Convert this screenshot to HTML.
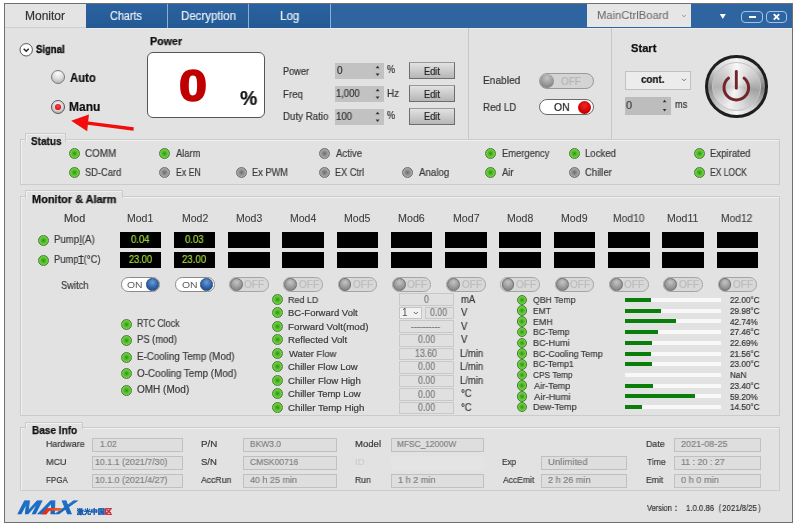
<!DOCTYPE html><html><head><meta charset="utf-8"><style>
html,body{margin:0;padding:0;background:#fff;width:796px;height:527px;overflow:hidden;}
body{position:relative;font-family:"Liberation Sans", sans-serif;}
.a{position:absolute;box-sizing:border-box;}
.t{position:absolute;white-space:nowrap;transform-origin:0 0;will-change:transform;-webkit-text-stroke-width:0.2px;}
.ledg{border-radius:50%;border:0.9px solid #4a7a34;background:radial-gradient(circle at 50% 50%, #348e1c 0%, #4fb22a 30%, #6ad53c 62%, #5cc431 88%);}
.ledx{border-radius:50%;border:0.9px solid #6c6c6c;background:radial-gradient(circle at 50% 50%, #6c6c6c 0%, #8a8a8a 32%, #a9a9a9 64%, #929292 88%);}
.grp{border:1px solid #c6c6c6;box-shadow:inset 1px 1px 0 #f2f2f2;}
.gtab{border:1px solid #c6c6c6;border-bottom:none;background:#e2e2e2;box-shadow:inset 1px 1px 0 #f2f2f2;}
</style></head><body>

<div class="a" style="left:4.00px;top:3.00px;width:789.00px;height:520.00px;background:#e2e2e2;border:1px solid #707070;"></div>
<div class="a" style="left:5.00px;top:4.00px;width:787.00px;height:24.00px;background:#2e64a0;"></div>
<div class="a" style="left:86.00px;top:28.00px;width:706.00px;height:1.00px;background:#ececec;"></div>
<div class="a" style="left:5.00px;top:4.00px;width:81.00px;height:23.00px;background:#e4e4e4;"></div>
<div class="a" style="left:86.00px;top:4.00px;width:81.00px;height:24.00px;background:linear-gradient(#2a62a0,#245a94);"></div>
<div class="a" style="left:167.00px;top:4.00px;width:81.00px;height:24.00px;background:linear-gradient(#2a62a0,#245a94);"></div>
<div class="a" style="left:248.00px;top:4.00px;width:82.00px;height:24.00px;background:linear-gradient(#2a62a0,#245a94);"></div>
<div class="a" style="left:167.00px;top:4.00px;width:1.00px;height:24.00px;background:#8cb0d4;"></div>
<div class="a" style="left:248.00px;top:4.00px;width:1.00px;height:24.00px;background:#8cb0d4;"></div>
<div class="a" style="left:330.00px;top:4.00px;width:1.00px;height:24.00px;background:#8cb0d4;"></div>
<div class="a" style="left:5.00px;top:27.00px;width:81.00px;height:1.00px;background:#cfcfcf;"></div>
<div class="t" style="left:25.04px;top:9.94px;font-size:12px;line-height:12px;color:#333;">Monitor</div>
<div class="t" style="left:110.46px;top:9.64px;font-size:12px;line-height:12px;color:#e6edf5;transform:scaleX(0.9033);">Charts</div>
<div class="t" style="left:180.88px;top:9.74px;font-size:12px;line-height:12px;color:#e6edf5;transform:scaleX(0.9583);">Decryption</div>
<div class="t" style="left:279.87px;top:9.74px;font-size:12px;line-height:12px;color:#e6edf5;transform:scaleX(0.9649);">Log</div>
<div class="a" style="left:587.00px;top:4.00px;width:104.00px;height:23.00px;background:#e6e6e6;"></div>
<div class="t" style="left:597.10px;top:10.07px;font-size:11.5px;line-height:11.5px;color:#6a6a6a;transform:scaleX(0.9747);-webkit-text-stroke-width:0.05px;">MainCtrlBoard</div>
<svg class="a" style="left:680px;top:12px" width="8" height="8"><path d="M2.2 3 L4 4.8 L5.8 3" fill="none" stroke="#888" stroke-width="0.9"/></svg>
<svg class="a" style="left:716px;top:10px" width="14" height="12"><path d="M3.8 4 L9.8 4 L6.8 9 Z" fill="#fff"/></svg>
<div class="a" style="left:741.00px;top:10.50px;width:22.00px;height:12.00px;border:1.5px solid #a4c4e6;border-radius:4px;"></div>
<div class="a" style="left:748.50px;top:15.50px;width:7.50px;height:2.00px;background:#fff;"></div>
<div class="a" style="left:766.00px;top:10.50px;width:21.00px;height:12.00px;border:1.5px solid #a4c4e6;border-radius:4px;"></div>
<svg class="a" style="left:766px;top:10.5px" width="21" height="12"><path d="M7.8 3.2 L13.2 8.6 M13.2 3.2 L7.8 8.6" stroke="#fff" stroke-width="1.9"/></svg>
<div class="a" style="left:468.00px;top:28.00px;width:1.00px;height:111.00px;background:#c8c8c8;"></div>
<div class="a" style="left:611.00px;top:28.00px;width:1.00px;height:111.00px;background:#c8c8c8;"></div>
<svg class="a" style="left:19px;top:43px" width="15" height="15"><circle cx="7.2" cy="6.8" r="6.2" fill="#fff" stroke="#444" stroke-width="0.9"/><path d="M4.7 5.7 L7.2 8.2 L9.7 5.7" fill="none" stroke="#222" stroke-width="1.5"/></svg>
<div class="t" style="left:35.51px;top:44.83px;font-size:10px;line-height:10px;color:#111;font-weight:bold;transform:scaleX(0.9501);-webkit-text-stroke-width:0.4px;">Signal</div>
<div class="a" style="left:50.8px;top:69.9px;width:14px;height:14px;border-radius:50%;border:1px solid #7a7a7a;background:radial-gradient(circle at 50% 20%, #fdfdfd 0%, #dcdcdc 50%, #a4a4a4 100%);"></div>
<div class="t" style="left:69.72px;top:71.64px;font-size:12px;line-height:12px;color:#111;font-weight:bold;transform:scaleX(0.9427);">Auto</div>
<div class="a" style="left:50.8px;top:100px;width:14px;height:14px;border-radius:50%;border:1.2px solid #555;background:radial-gradient(circle at 50% 30%, #f0f0f0 0%, #cfcfcf 60%, #9a9a9a 100%);"></div>
<div class="a" style="left:54.6px;top:103.8px;width:6.5px;height:6.5px;border-radius:50%;background:radial-gradient(circle at 50% 40%, #ff4a4a 0%, #e81010 60%, #b00000 100%);"></div>
<div class="t" style="left:69.22px;top:101.04px;font-size:12px;line-height:12px;color:#111;font-weight:bold;">Manu</div>
<svg class="a" style="left:60px;top:108px" width="80" height="30"><path d="M24 14.6 L73.6 21" stroke="#f20c0c" stroke-width="3.3"/><path d="M11.2 12.8 L28.9 6.5 L27.2 23.3 Z" fill="#f20c0c"/></svg>
<div class="t" style="left:150.20px;top:36.49px;font-size:11px;line-height:11px;color:#111;font-weight:bold;transform:scaleX(0.9745);-webkit-text-stroke:0.25px #111;">Power</div>
<div class="a" style="left:146.70px;top:51.70px;width:118.00px;height:66.00px;background:#fff;border:1px solid #555;border-radius:6px;"></div>
<div class="t" style="left:179.49px;top:62.71px;font-size:45px;line-height:45px;color:#c00000;font-weight:bold;transform:scaleX(1.1181);-webkit-text-stroke:1.6px #c00000;">0</div>
<div class="t" style="left:239.51px;top:87.87px;font-size:20px;line-height:20px;color:#111;font-weight:bold;transform:scaleX(0.9702);">%</div>
<div class="t" style="left:283.07px;top:65.71px;font-size:10.5px;line-height:10.5px;color:#333;transform:scaleX(0.8740);">Power</div>
<div class="a" style="left:335.20px;top:63.30px;width:48.50px;height:15.60px;background:#c2c2c2;"></div>
<div class="t" style="left:336.60px;top:66.13px;font-size:10px;line-height:10px;color:#333;">0</div>
<svg class="a" style="left:373px;top:63.3px" width="9" height="16"><path d="M2.6 5.2 L4.6 2.7 L6.6 5.2 Z M2.6 10.5 L4.6 13 L6.6 10.5 Z" fill="#333"/></svg>
<div class="t" style="left:387.18px;top:64.41px;font-size:10.5px;line-height:10.5px;color:#333;transform:scaleX(0.8595);">%</div>
<div class="a" style="left:409.00px;top:62.20px;width:46.10px;height:16.70px;background:linear-gradient(#e2e2e2,#b6b6b6);border:1px solid #6e6e6e;border-top-color:#9a9a9a;"></div>
<div class="t" style="left:423.86px;top:65.71px;font-size:10.5px;line-height:10.5px;color:#222;transform:scaleX(0.8854);">Edit</div>
<div class="t" style="left:283.03px;top:88.81px;font-size:10.5px;line-height:10.5px;color:#333;transform:scaleX(0.9225);">Freq</div>
<div class="a" style="left:335.20px;top:86.10px;width:48.50px;height:15.60px;background:#c2c2c2;"></div>
<div class="t" style="left:336.29px;top:88.93px;font-size:10px;line-height:10px;color:#333;transform:scaleX(0.9414);">1,000</div>
<svg class="a" style="left:373px;top:86.1px" width="9" height="16"><path d="M2.6 5.2 L4.6 2.7 L6.6 5.2 Z M2.6 10.5 L4.6 13 L6.6 10.5 Z" fill="#333"/></svg>
<div class="t" style="left:386.71px;top:87.61px;font-size:10.5px;line-height:10.5px;color:#333;transform:scaleX(0.9436);">Hz</div>
<div class="a" style="left:409.00px;top:85.00px;width:46.10px;height:16.70px;background:linear-gradient(#e2e2e2,#b6b6b6);border:1px solid #6e6e6e;border-top-color:#9a9a9a;"></div>
<div class="t" style="left:423.86px;top:88.51px;font-size:10.5px;line-height:10.5px;color:#222;transform:scaleX(0.8854);">Edit</div>
<div class="t" style="left:283.02px;top:111.41px;font-size:10.5px;line-height:10.5px;color:#333;transform:scaleX(0.9262);">Duty Ratio</div>
<div class="a" style="left:335.20px;top:109.00px;width:48.50px;height:15.60px;background:#c2c2c2;"></div>
<div class="t" style="left:336.28px;top:111.83px;font-size:10px;line-height:10px;color:#333;transform:scaleX(0.9646);">100</div>
<svg class="a" style="left:373px;top:109px" width="9" height="16"><path d="M2.6 5.2 L4.6 2.7 L6.6 5.2 Z M2.6 10.5 L4.6 13 L6.6 10.5 Z" fill="#333"/></svg>
<div class="t" style="left:387.18px;top:110.11px;font-size:10.5px;line-height:10.5px;color:#333;transform:scaleX(0.8595);">%</div>
<div class="a" style="left:409.00px;top:107.90px;width:46.10px;height:16.70px;background:linear-gradient(#e2e2e2,#b6b6b6);border:1px solid #6e6e6e;border-top-color:#9a9a9a;"></div>
<div class="t" style="left:423.86px;top:111.41px;font-size:10.5px;line-height:10.5px;color:#222;transform:scaleX(0.8854);">Edit</div>
<div class="t" style="left:482.79px;top:75.09px;font-size:11px;line-height:11px;color:#333;transform:scaleX(0.9233);">Enabled</div>
<div class="t" style="left:482.81px;top:101.89px;font-size:11px;line-height:11px;color:#333;transform:scaleX(0.8938);">Red LD</div>
<div class="a" style="left:538.60px;top:72.60px;width:55.00px;height:16.20px;background:#d4d4d4;border:1px solid #9a9a9a;border-radius:8.1px;"></div>
<div class="a" style="left:539.8px;top:73.6px;width:14.2px;height:14.2px;border-radius:50%;background:radial-gradient(circle at 50% 28%, #c4c4c4 0%, #8e8e8e 65%, #6a6a6a 100%);"></div>
<div class="t" style="left:561.05px;top:75.61px;font-size:10.5px;line-height:10.5px;color:#b4b4b4;transform:scaleX(0.9449);">OFF</div>
<div class="a" style="left:538.60px;top:99.20px;width:55.00px;height:16.00px;background:#fff;border:1px solid #6a6a6a;border-radius:8px;"></div>
<div class="t" style="left:553.84px;top:102.11px;font-size:10.5px;line-height:10.5px;color:#222;transform:scaleX(0.9835);">ON</div>
<div class="a" style="left:577.8px;top:100.6px;width:13.2px;height:13.2px;border-radius:50%;background:radial-gradient(circle at 50% 35%, #f02828 0%, #d00000 60%, #8a0000 100%);"></div>
<div class="t" style="left:631.47px;top:43.19px;font-size:11px;line-height:11px;color:#111;font-weight:bold;transform:scaleX(1.0128);-webkit-text-stroke:0.25px #111;">Start</div>
<div class="a" style="left:625.30px;top:71.10px;width:65.30px;height:19.00px;background:#ececec;border:1px solid #c0c0c0;"></div>
<div class="t" style="left:640.91px;top:73.99px;font-size:11px;line-height:11px;color:#111;font-weight:bold;transform:scaleX(0.8931);">cont.</div>
<svg class="a" style="left:680px;top:76px" width="8" height="8"><path d="M2 2.8 L4 4.8 L6 2.8" fill="none" stroke="#666" stroke-width="0.9"/></svg>
<div class="a" style="left:625.30px;top:96.50px;width:45.60px;height:18.20px;background:#bdbdbd;"></div>
<div class="t" style="left:626.36px;top:100.11px;font-size:10.5px;line-height:10.5px;color:#444;transform:scaleX(1.0516);">0</div>
<svg class="a" style="left:660px;top:97px" width="9" height="17"><path d="M2.8 5.2 L4.6 2.7 L6.4 5.2 Z M2.8 12 L4.6 14.5 L6.4 12 Z" fill="#333"/></svg>
<div class="t" style="left:675.10px;top:99.01px;font-size:10.5px;line-height:10.5px;color:#333;transform:scaleX(0.8791);">ms</div>
<div class="a" style="left:705.30px;top:55.30px;width:62.4px;height:62.4px;border-radius:50%;background:#1e1e1e;"></div>
<div class="a" style="left:707.70px;top:57.70px;width:57.6px;height:57.6px;border-radius:50%;background:conic-gradient(from 0deg, #f4f4f4 0deg, #d4d4d4 45deg, #7c7c7c 95deg, #cfcfcf 140deg, #f8f8f8 180deg, #c8c8c8 225deg, #8a8a8a 268deg, #d6d6d6 312deg, #f4f4f4 360deg);"></div>
<div class="a" style="left:711.75px;top:61.75px;width:49.5px;height:49.5px;border-radius:50%;background:radial-gradient(circle, #c4c4c4 80%, #707070 100%);"></div>
<div class="a" style="left:713.30px;top:63.30px;width:46.4px;height:46.4px;border-radius:50%;background:radial-gradient(circle, rgba(255,255,255,0.65) 0%, rgba(255,255,255,0) 45%, rgba(0,0,0,0) 80%, rgba(0,0,0,0.22) 100%), conic-gradient(from 0deg, #f8f8f8 0deg, #c6c6c6 65deg, #a2a2a2 100deg, #d8d8d8 160deg, #f0f0f0 200deg, #b4b4b4 268deg, #d2d2d2 320deg, #f8f8f8 360deg);"></div>
<svg class="a" style="left:704px;top:54px" width="65" height="65">
<path d="M24.5 24.1 A12.3 12.3 0 1 0 40.1 24.1" fill="none" stroke="#72262a" stroke-width="3" stroke-linecap="round"/>
<path d="M32.3 17.4 L32.3 34.3" stroke="#72262a" stroke-width="2.9" stroke-linecap="round"/>
</svg>
<div class="a" style="left:19.60px;top:139.40px;width:760.40px;height:46.00px;border:1px solid #cbcbcb;box-shadow:inset 1px 1px 0 #f0f0f0;"></div>
<div class="a" style="left:25.30px;top:133.40px;width:41.00px;height:8.20px;border:1px solid #cbcbcb;border-bottom:none;background:#e2e2e2;box-shadow:inset 1px 1px 0 #f0f0f0;"></div>
<div class="t" style="left:30.90px;top:135.79px;font-size:11px;line-height:11px;color:#111;font-weight:bold;transform:scaleX(0.9106);-webkit-text-stroke:0.25px #111;">Status</div>
<div class="a ledg" style="left:68.80px;top:147.50px;width:11px;height:11px;"></div>
<div class="t" style="left:85.31px;top:147.71px;font-size:10.5px;line-height:10.5px;color:#3a3a3a;transform:scaleX(0.9414);">COMM</div>
<div class="a ledg" style="left:159.40px;top:147.50px;width:11px;height:11px;"></div>
<div class="t" style="left:176.40px;top:147.71px;font-size:10.5px;line-height:10.5px;color:#3a3a3a;transform:scaleX(0.8889);">Alarm</div>
<div class="a ledx" style="left:318.60px;top:147.50px;width:11px;height:11px;"></div>
<div class="t" style="left:335.60px;top:147.71px;font-size:10.5px;line-height:10.5px;color:#3a3a3a;transform:scaleX(0.9114);">Active</div>
<div class="a ledg" style="left:485.30px;top:147.50px;width:11px;height:11px;"></div>
<div class="t" style="left:501.55px;top:147.71px;font-size:10.5px;line-height:10.5px;color:#3a3a3a;transform:scaleX(0.8931);">Emergency</div>
<div class="a ledg" style="left:568.50px;top:147.50px;width:11px;height:11px;"></div>
<div class="t" style="left:584.73px;top:147.71px;font-size:10.5px;line-height:10.5px;color:#3a3a3a;transform:scaleX(0.9122);">Locked</div>
<div class="a ledg" style="left:693.50px;top:147.50px;width:11px;height:11px;"></div>
<div class="t" style="left:709.73px;top:147.71px;font-size:10.5px;line-height:10.5px;color:#3a3a3a;transform:scaleX(0.9127);">Expirated</div>
<div class="a ledg" style="left:68.80px;top:166.50px;width:11px;height:11px;"></div>
<div class="t" style="left:85.38px;top:166.71px;font-size:10.5px;line-height:10.5px;color:#3a3a3a;transform:scaleX(0.8869);">SD-Card</div>
<div class="a ledx" style="left:159.40px;top:166.50px;width:11px;height:11px;"></div>
<div class="t" style="left:175.70px;top:166.71px;font-size:10.5px;line-height:10.5px;color:#3a3a3a;transform:scaleX(0.8311);">Ex EN</div>
<div class="a ledx" style="left:235.50px;top:166.50px;width:11px;height:11px;"></div>
<div class="t" style="left:251.76px;top:166.71px;font-size:10.5px;line-height:10.5px;color:#3a3a3a;transform:scaleX(0.8821);">Ex PWM</div>
<div class="a ledx" style="left:318.60px;top:166.50px;width:11px;height:11px;"></div>
<div class="t" style="left:334.87px;top:166.71px;font-size:10.5px;line-height:10.5px;color:#3a3a3a;transform:scaleX(0.8704);">EX Ctrl</div>
<div class="a ledx" style="left:402.00px;top:166.50px;width:11px;height:11px;"></div>
<div class="t" style="left:419.00px;top:166.71px;font-size:10.5px;line-height:10.5px;color:#3a3a3a;transform:scaleX(0.9274);">Analog</div>
<div class="a ledg" style="left:485.30px;top:166.50px;width:11px;height:11px;"></div>
<div class="t" style="left:502.30px;top:166.71px;font-size:10.5px;line-height:10.5px;color:#3a3a3a;transform:scaleX(0.9089);">Air</div>
<div class="a ledx" style="left:568.50px;top:166.50px;width:11px;height:11px;"></div>
<div class="t" style="left:585.03px;top:166.71px;font-size:10.5px;line-height:10.5px;color:#3a3a3a;transform:scaleX(0.9024);">Chiller</div>
<div class="a ledg" style="left:693.50px;top:166.50px;width:11px;height:11px;"></div>
<div class="t" style="left:709.82px;top:166.71px;font-size:10.5px;line-height:10.5px;color:#3a3a3a;transform:scaleX(0.8099);">EX LOCK</div>
<div class="a" style="left:19.60px;top:196.00px;width:760.40px;height:220.00px;border:1px solid #cbcbcb;box-shadow:inset 1px 1px 0 #f0f0f0;"></div>
<div class="a" style="left:25.30px;top:190.00px;width:97.50px;height:8.20px;border:1px solid #cbcbcb;border-bottom:none;background:#e2e2e2;box-shadow:inset 1px 1px 0 #f0f0f0;"></div>
<div class="t" style="left:32.19px;top:193.69px;font-size:11px;line-height:11px;color:#111;font-weight:bold;transform:scaleX(0.9921);-webkit-text-stroke:0.25px #111;">Monitor &amp; Alarm</div>
<div class="t" style="left:63.93px;top:213.41px;font-size:10.5px;line-height:10.5px;color:#3a3a3a;transform:scaleX(1.0370);">Mod</div>
<div class="t" style="left:60.58px;top:279.61px;font-size:10.5px;line-height:10.5px;color:#3a3a3a;transform:scaleX(0.8902);">Switch</div>
<div class="t" style="left:126.66px;top:213.41px;font-size:10.5px;line-height:10.5px;color:#3a3a3a;-webkit-text-stroke-width:0.08px;">Mod1</div>
<div class="a" style="left:119.50px;top:231.50px;width:41.50px;height:16.00px;background:#000;"></div>
<div class="a" style="left:119.50px;top:252.30px;width:41.50px;height:16.00px;background:#000;"></div>
<div class="a" style="left:120.50px;top:277.10px;width:39.90px;height:14.50px;background:#fff;border:1px solid #8a8a8a;border-radius:7.3px;"></div>
<div class="t" style="left:127.43px;top:279.76px;font-size:9.5px;line-height:9.5px;color:#5a5a5a;transform:scaleX(1.0947);-webkit-text-stroke-width:0;">ON</div>
<div class="a" style="left:146.1px;top:278.2px;width:12.5px;height:12.5px;border-radius:50%;border:0.7px solid #29497a;background:radial-gradient(circle at 50% 30%, #6a9ad8 0%, #2f64aa 55%, #1c4078 100%);"></div>
<div class="t" style="left:181.66px;top:213.41px;font-size:10.5px;line-height:10.5px;color:#3a3a3a;-webkit-text-stroke-width:0.08px;">Mod2</div>
<div class="a" style="left:173.78px;top:231.50px;width:41.50px;height:16.00px;background:#000;"></div>
<div class="a" style="left:173.78px;top:252.30px;width:41.50px;height:16.00px;background:#000;"></div>
<div class="a" style="left:174.78px;top:277.10px;width:39.90px;height:14.50px;background:#fff;border:1px solid #8a8a8a;border-radius:7.3px;"></div>
<div class="t" style="left:181.71px;top:279.76px;font-size:9.5px;line-height:9.5px;color:#5a5a5a;transform:scaleX(1.0947);-webkit-text-stroke-width:0;">ON</div>
<div class="a" style="left:200.4px;top:278.2px;width:12.5px;height:12.5px;border-radius:50%;border:0.7px solid #29497a;background:radial-gradient(circle at 50% 30%, #6a9ad8 0%, #2f64aa 55%, #1c4078 100%);"></div>
<div class="t" style="left:235.56px;top:213.41px;font-size:10.5px;line-height:10.5px;color:#3a3a3a;-webkit-text-stroke-width:0.08px;">Mod3</div>
<div class="a" style="left:228.06px;top:231.50px;width:41.50px;height:16.00px;background:#000;"></div>
<div class="a" style="left:228.06px;top:252.30px;width:41.50px;height:16.00px;background:#000;"></div>
<div class="a" style="left:229.06px;top:277.10px;width:39.50px;height:14.50px;background:#d8d8d8;border:1px solid #a4a4a4;border-radius:7.3px;"></div>
<div class="a" style="left:230.2px;top:278.1px;width:12.8px;height:12.8px;border-radius:50%;border:0.7px solid #707070;background:radial-gradient(circle at 50% 30%, #c4c4c4 0%, #969696 60%, #7a7a7a 100%);"></div>
<div class="t" style="left:244.41px;top:279.94px;font-size:10px;line-height:10px;color:#bcbcbc;">OFF</div>
<div class="t" style="left:290.16px;top:213.41px;font-size:10.5px;line-height:10.5px;color:#3a3a3a;-webkit-text-stroke-width:0.08px;">Mod4</div>
<div class="a" style="left:282.34px;top:231.50px;width:41.50px;height:16.00px;background:#000;"></div>
<div class="a" style="left:282.34px;top:252.30px;width:41.50px;height:16.00px;background:#000;"></div>
<div class="a" style="left:283.34px;top:277.10px;width:39.50px;height:14.50px;background:#d8d8d8;border:1px solid #a4a4a4;border-radius:7.3px;"></div>
<div class="a" style="left:284.4px;top:278.1px;width:12.8px;height:12.8px;border-radius:50%;border:0.7px solid #707070;background:radial-gradient(circle at 50% 30%, #c4c4c4 0%, #969696 60%, #7a7a7a 100%);"></div>
<div class="t" style="left:298.69px;top:279.94px;font-size:10px;line-height:10px;color:#bcbcbc;">OFF</div>
<div class="t" style="left:343.85px;top:213.41px;font-size:10.5px;line-height:10.5px;color:#3a3a3a;transform:scaleX(1.0084);-webkit-text-stroke-width:0.08px;">Mod5</div>
<div class="a" style="left:336.62px;top:231.50px;width:41.50px;height:16.00px;background:#000;"></div>
<div class="a" style="left:336.62px;top:252.30px;width:41.50px;height:16.00px;background:#000;"></div>
<div class="a" style="left:337.62px;top:277.10px;width:39.50px;height:14.50px;background:#d8d8d8;border:1px solid #a4a4a4;border-radius:7.3px;"></div>
<div class="a" style="left:338.7px;top:278.1px;width:12.8px;height:12.8px;border-radius:50%;border:0.7px solid #707070;background:radial-gradient(circle at 50% 30%, #c4c4c4 0%, #969696 60%, #7a7a7a 100%);"></div>
<div class="t" style="left:352.97px;top:279.94px;font-size:10px;line-height:10px;color:#bcbcbc;">OFF</div>
<div class="t" style="left:398.44px;top:213.41px;font-size:10.5px;line-height:10.5px;color:#3a3a3a;transform:scaleX(1.0204);-webkit-text-stroke-width:0.08px;">Mod6</div>
<div class="a" style="left:390.90px;top:231.50px;width:41.50px;height:16.00px;background:#000;"></div>
<div class="a" style="left:390.90px;top:252.30px;width:41.50px;height:16.00px;background:#000;"></div>
<div class="a" style="left:391.90px;top:277.10px;width:39.50px;height:14.50px;background:#d8d8d8;border:1px solid #a4a4a4;border-radius:7.3px;"></div>
<div class="a" style="left:393.0px;top:278.1px;width:12.8px;height:12.8px;border-radius:50%;border:0.7px solid #707070;background:radial-gradient(circle at 50% 30%, #c4c4c4 0%, #969696 60%, #7a7a7a 100%);"></div>
<div class="t" style="left:407.25px;top:279.94px;font-size:10px;line-height:10px;color:#bcbcbc;">OFF</div>
<div class="t" style="left:452.65px;top:213.41px;font-size:10.5px;line-height:10.5px;color:#3a3a3a;transform:scaleX(1.0127);-webkit-text-stroke-width:0.08px;">Mod7</div>
<div class="a" style="left:445.18px;top:231.50px;width:41.50px;height:16.00px;background:#000;"></div>
<div class="a" style="left:445.18px;top:252.30px;width:41.50px;height:16.00px;background:#000;"></div>
<div class="a" style="left:446.18px;top:277.10px;width:39.50px;height:14.50px;background:#d8d8d8;border:1px solid #a4a4a4;border-radius:7.3px;"></div>
<div class="a" style="left:447.3px;top:278.1px;width:12.8px;height:12.8px;border-radius:50%;border:0.7px solid #707070;background:radial-gradient(circle at 50% 30%, #c4c4c4 0%, #969696 60%, #7a7a7a 100%);"></div>
<div class="t" style="left:461.53px;top:279.94px;font-size:10px;line-height:10px;color:#bcbcbc;">OFF</div>
<div class="t" style="left:506.66px;top:213.41px;font-size:10.5px;line-height:10.5px;color:#3a3a3a;-webkit-text-stroke-width:0.08px;">Mod8</div>
<div class="a" style="left:499.46px;top:231.50px;width:41.50px;height:16.00px;background:#000;"></div>
<div class="a" style="left:499.46px;top:252.30px;width:41.50px;height:16.00px;background:#000;"></div>
<div class="a" style="left:500.46px;top:277.10px;width:39.50px;height:14.50px;background:#d8d8d8;border:1px solid #a4a4a4;border-radius:7.3px;"></div>
<div class="a" style="left:501.6px;top:278.1px;width:12.8px;height:12.8px;border-radius:50%;border:0.7px solid #707070;background:radial-gradient(circle at 50% 30%, #c4c4c4 0%, #969696 60%, #7a7a7a 100%);"></div>
<div class="t" style="left:515.81px;top:279.94px;font-size:10px;line-height:10px;color:#bcbcbc;">OFF</div>
<div class="t" style="left:561.25px;top:213.41px;font-size:10.5px;line-height:10.5px;color:#3a3a3a;transform:scaleX(1.0105);-webkit-text-stroke-width:0.08px;">Mod9</div>
<div class="a" style="left:553.74px;top:231.50px;width:41.50px;height:16.00px;background:#000;"></div>
<div class="a" style="left:553.74px;top:252.30px;width:41.50px;height:16.00px;background:#000;"></div>
<div class="a" style="left:554.74px;top:277.10px;width:39.50px;height:14.50px;background:#d8d8d8;border:1px solid #a4a4a4;border-radius:7.3px;"></div>
<div class="a" style="left:555.8px;top:278.1px;width:12.8px;height:12.8px;border-radius:50%;border:0.7px solid #707070;background:radial-gradient(circle at 50% 30%, #c4c4c4 0%, #969696 60%, #7a7a7a 100%);"></div>
<div class="t" style="left:570.09px;top:279.94px;font-size:10px;line-height:10px;color:#bcbcbc;">OFF</div>
<div class="t" style="left:612.68px;top:213.41px;font-size:10.5px;line-height:10.5px;color:#3a3a3a;transform:scaleX(0.9815);-webkit-text-stroke-width:0.08px;">Mod10</div>
<div class="a" style="left:608.02px;top:231.50px;width:41.50px;height:16.00px;background:#000;"></div>
<div class="a" style="left:608.02px;top:252.30px;width:41.50px;height:16.00px;background:#000;"></div>
<div class="a" style="left:609.02px;top:277.10px;width:39.50px;height:14.50px;background:#d8d8d8;border:1px solid #a4a4a4;border-radius:7.3px;"></div>
<div class="a" style="left:610.1px;top:278.1px;width:12.8px;height:12.8px;border-radius:50%;border:0.7px solid #707070;background:radial-gradient(circle at 50% 30%, #c4c4c4 0%, #969696 60%, #7a7a7a 100%);"></div>
<div class="t" style="left:624.37px;top:279.94px;font-size:10px;line-height:10px;color:#bcbcbc;">OFF</div>
<div class="t" style="left:666.86px;top:213.41px;font-size:10.5px;line-height:10.5px;color:#3a3a3a;-webkit-text-stroke-width:0.08px;">Mod11</div>
<div class="a" style="left:662.30px;top:231.50px;width:41.50px;height:16.00px;background:#000;"></div>
<div class="a" style="left:662.30px;top:252.30px;width:41.50px;height:16.00px;background:#000;"></div>
<div class="a" style="left:663.30px;top:277.10px;width:39.50px;height:14.50px;background:#d8d8d8;border:1px solid #a4a4a4;border-radius:7.3px;"></div>
<div class="a" style="left:664.4px;top:278.1px;width:12.8px;height:12.8px;border-radius:50%;border:0.7px solid #707070;background:radial-gradient(circle at 50% 30%, #c4c4c4 0%, #969696 60%, #7a7a7a 100%);"></div>
<div class="t" style="left:678.65px;top:279.94px;font-size:10px;line-height:10px;color:#bcbcbc;">OFF</div>
<div class="t" style="left:721.48px;top:213.41px;font-size:10.5px;line-height:10.5px;color:#3a3a3a;transform:scaleX(0.9768);-webkit-text-stroke-width:0.08px;">Mod12</div>
<div class="a" style="left:716.58px;top:231.50px;width:41.50px;height:16.00px;background:#000;"></div>
<div class="a" style="left:716.58px;top:252.30px;width:41.50px;height:16.00px;background:#000;"></div>
<div class="a" style="left:717.58px;top:277.10px;width:39.50px;height:14.50px;background:#d8d8d8;border:1px solid #a4a4a4;border-radius:7.3px;"></div>
<div class="a" style="left:718.7px;top:278.1px;width:12.8px;height:12.8px;border-radius:50%;border:0.7px solid #707070;background:radial-gradient(circle at 50% 30%, #c4c4c4 0%, #969696 60%, #7a7a7a 100%);"></div>
<div class="t" style="left:732.93px;top:279.94px;font-size:10px;line-height:10px;color:#bcbcbc;">OFF</div>
<div class="t" style="left:131.02px;top:234.01px;font-size:10.5px;line-height:10.5px;color:#a6de3a;transform:scaleX(0.9092);">0.04</div>
<div class="t" style="left:185.22px;top:234.01px;font-size:10.5px;line-height:10.5px;color:#a6de3a;transform:scaleX(0.9141);">0.03</div>
<div class="t" style="left:128.54px;top:254.31px;font-size:10.5px;line-height:10.5px;color:#a6de3a;transform:scaleX(0.8755);">23.00</div>
<div class="t" style="left:182.22px;top:254.31px;font-size:10.5px;line-height:10.5px;color:#a6de3a;transform:scaleX(0.9228);">23.00</div>
<div class="a ledg" style="left:38.00px;top:234.50px;width:11px;height:11px;"></div>
<div class="a ledg" style="left:38.00px;top:254.80px;width:11px;height:11px;"></div>
<div class="t" style="left:53.83px;top:234.11px;font-size:10.5px;line-height:10.5px;color:#3a3a3a;transform:scaleX(0.9197);">Pump<u style="text-decoration-thickness:0.8px;text-underline-offset:0.5px">I</u>(A)</div>
<div class="t" style="left:53.85px;top:254.31px;font-size:10.5px;line-height:10.5px;color:#3a3a3a;transform:scaleX(0.8980);">Pump<span style="display:inline-block;position:relative;padding:0 1.3px;">I<span style="position:absolute;left:0;right:0;top:1.6px;border-top:0.9px solid #3a3a3a"></span><span style="position:absolute;left:0;right:0;top:8.6px;border-top:0.9px solid #3a3a3a"></span></span>(&deg;C)</div>
<div class="a ledg" style="left:120.90px;top:318.60px;width:11px;height:11px;"></div>
<div class="t" style="left:137.20px;top:318.74px;font-size:10px;line-height:10px;color:#3a3a3a;transform:scaleX(0.8807);">RTC Clock</div>
<div class="a ledg" style="left:120.90px;top:335.20px;width:11px;height:11px;"></div>
<div class="t" style="left:137.15px;top:335.34px;font-size:10px;line-height:10px;color:#3a3a3a;transform:scaleX(0.9412);">PS (mod)</div>
<div class="a ledg" style="left:120.90px;top:351.80px;width:11px;height:11px;"></div>
<div class="t" style="left:137.12px;top:351.94px;font-size:10px;line-height:10px;color:#3a3a3a;transform:scaleX(0.9761);">E-Cooling Temp (Mod)</div>
<div class="a ledg" style="left:120.90px;top:368.40px;width:11px;height:11px;"></div>
<div class="t" style="left:137.46px;top:368.54px;font-size:10px;line-height:10px;color:#3a3a3a;transform:scaleX(0.9860);">O-Cooling Temp (Mod)</div>
<div class="a ledg" style="left:120.90px;top:385.00px;width:11px;height:11px;"></div>
<div class="t" style="left:137.45px;top:385.14px;font-size:10px;line-height:10px;color:#3a3a3a;">OMH (Mod)</div>
<div class="a ledg" style="left:271.50px;top:293.80px;width:11px;height:11px;"></div>
<div class="t" style="left:287.98px;top:294.66px;font-size:9.5px;line-height:9.5px;color:#3a3a3a;transform:scaleX(0.9446);">Red LD</div>
<div class="a" style="left:398.60px;top:293.30px;width:55.00px;height:12.60px;background:#e0e0e0;border:1px solid #c8c8c8;"></div>
<div class="t" style="left:423.64px;top:294.67px;font-size:10.2px;line-height:10.2px;color:#7a7a7a;transform:scaleX(0.8600);">0</div>
<div class="t" style="left:460.58px;top:294.67px;font-size:10.2px;line-height:10.2px;color:#3a3a3a;transform:scaleX(0.9300);">mA</div>
<div class="a ledg" style="left:271.50px;top:307.30px;width:11px;height:11px;"></div>
<div class="t" style="left:287.94px;top:308.16px;font-size:9.5px;line-height:9.5px;color:#3a3a3a;">BC-Forward Volt</div>
<div class="a" style="left:398.60px;top:306.86px;width:23.00px;height:12.60px;background:#f2f2f2;border:1px solid #c4c4c4;"></div>
<div class="t" style="left:401.72px;top:308.20px;font-size:10px;line-height:10px;color:#555;transform:scaleX(0.9500);-webkit-text-stroke-width:0;">1</div>
<svg class="a" style="left:412px;top:309.9px" width="8" height="7"><path d="M1.8 2 L3.8 4 L5.8 2" fill="none" stroke="#555" stroke-width="0.9"/></svg>
<div class="a" style="left:424.50px;top:306.86px;width:29.10px;height:12.60px;background:#e0e0e0;border:1px solid #c8c8c8;"></div>
<div class="t" style="left:430.45px;top:308.23px;font-size:10.2px;line-height:10.2px;color:#7a7a7a;transform:scaleX(0.8600);">0.00</div>
<div class="t" style="left:461.15px;top:308.17px;font-size:10.2px;line-height:10.2px;color:#3a3a3a;transform:scaleX(0.9300);">V</div>
<div class="a ledg" style="left:271.50px;top:320.80px;width:11px;height:11px;"></div>
<div class="t" style="left:287.92px;top:321.66px;font-size:9.5px;line-height:9.5px;color:#3a3a3a;transform:scaleX(1.0305);">Forward Volt(mod)</div>
<div class="a" style="left:398.60px;top:320.42px;width:55.00px;height:12.60px;background:#e0e0e0;border:1px solid #c8c8c8;"></div>
<div class="t" style="left:411.49px;top:321.79px;font-size:10.2px;line-height:10.2px;color:#7a7a7a;transform:scaleX(0.8600);">----------</div>
<div class="t" style="left:461.15px;top:321.67px;font-size:10.2px;line-height:10.2px;color:#3a3a3a;transform:scaleX(0.9300);">V</div>
<div class="a ledg" style="left:271.50px;top:334.30px;width:11px;height:11px;"></div>
<div class="t" style="left:287.93px;top:335.16px;font-size:9.5px;line-height:9.5px;color:#3a3a3a;transform:scaleX(1.0085);">Reflected Volt</div>
<div class="a" style="left:398.60px;top:333.98px;width:55.00px;height:12.60px;background:#e0e0e0;border:1px solid #c8c8c8;"></div>
<div class="t" style="left:417.55px;top:335.35px;font-size:10.2px;line-height:10.2px;color:#7a7a7a;transform:scaleX(0.8600);">0.00</div>
<div class="t" style="left:461.15px;top:335.17px;font-size:10.2px;line-height:10.2px;color:#3a3a3a;transform:scaleX(0.9300);">V</div>
<div class="a ledg" style="left:271.50px;top:347.80px;width:11px;height:11px;"></div>
<div class="t" style="left:288.65px;top:348.66px;font-size:9.5px;line-height:9.5px;color:#3a3a3a;transform:scaleX(0.9928);">Water Flow</div>
<div class="a" style="left:398.60px;top:347.54px;width:55.00px;height:12.60px;background:#e0e0e0;border:1px solid #c8c8c8;"></div>
<div class="t" style="left:414.96px;top:348.91px;font-size:10.2px;line-height:10.2px;color:#7a7a7a;transform:scaleX(0.8600);">13.60</div>
<div class="t" style="left:460.44px;top:348.67px;font-size:10.2px;line-height:10.2px;color:#3a3a3a;transform:scaleX(0.9300);">L/min</div>
<div class="a ledg" style="left:271.50px;top:361.30px;width:11px;height:11px;"></div>
<div class="t" style="left:288.23px;top:362.16px;font-size:9.5px;line-height:9.5px;color:#3a3a3a;">Chiller Flow Low</div>
<div class="a" style="left:398.60px;top:361.10px;width:55.00px;height:12.60px;background:#e0e0e0;border:1px solid #c8c8c8;"></div>
<div class="t" style="left:417.55px;top:362.47px;font-size:10.2px;line-height:10.2px;color:#7a7a7a;transform:scaleX(0.8600);">0.00</div>
<div class="t" style="left:460.44px;top:362.17px;font-size:10.2px;line-height:10.2px;color:#3a3a3a;transform:scaleX(0.9300);">L/min</div>
<div class="a ledg" style="left:271.50px;top:374.80px;width:11px;height:11px;"></div>
<div class="t" style="left:288.22px;top:375.66px;font-size:9.5px;line-height:9.5px;color:#3a3a3a;transform:scaleX(1.0130);">Chiller Flow High</div>
<div class="a" style="left:398.60px;top:374.66px;width:55.00px;height:12.60px;background:#e0e0e0;border:1px solid #c8c8c8;"></div>
<div class="t" style="left:417.55px;top:376.03px;font-size:10.2px;line-height:10.2px;color:#7a7a7a;transform:scaleX(0.8600);">0.00</div>
<div class="t" style="left:460.44px;top:375.67px;font-size:10.2px;line-height:10.2px;color:#3a3a3a;transform:scaleX(0.9300);">L/min</div>
<div class="a ledg" style="left:271.50px;top:388.30px;width:11px;height:11px;"></div>
<div class="t" style="left:288.23px;top:389.16px;font-size:9.5px;line-height:9.5px;color:#3a3a3a;">Chiller Temp Low</div>
<div class="a" style="left:398.60px;top:388.22px;width:55.00px;height:12.60px;background:#e0e0e0;border:1px solid #c8c8c8;"></div>
<div class="t" style="left:417.55px;top:389.59px;font-size:10.2px;line-height:10.2px;color:#7a7a7a;transform:scaleX(0.8600);">0.00</div>
<div class="t" style="left:460.63px;top:389.17px;font-size:10.2px;line-height:10.2px;color:#3a3a3a;transform:scaleX(0.9300);">°C</div>
<div class="a ledg" style="left:271.50px;top:401.80px;width:11px;height:11px;"></div>
<div class="t" style="left:288.21px;top:402.66px;font-size:9.5px;line-height:9.5px;color:#3a3a3a;transform:scaleX(1.0214);">Chiller Temp High</div>
<div class="a" style="left:398.60px;top:401.78px;width:55.00px;height:12.60px;background:#e0e0e0;border:1px solid #c8c8c8;"></div>
<div class="t" style="left:417.55px;top:403.15px;font-size:10.2px;line-height:10.2px;color:#7a7a7a;transform:scaleX(0.8600);">0.00</div>
<div class="t" style="left:460.63px;top:402.67px;font-size:10.2px;line-height:10.2px;color:#3a3a3a;transform:scaleX(0.9300);">°C</div>
<div class="a ledg" style="left:516.70px;top:294.70px;width:10.6px;height:10.6px;"></div>
<div class="t" style="left:533.21px;top:295.17px;font-size:9.6px;line-height:9.6px;color:#3a3a3a;transform:scaleX(0.9078);">QBH Temp</div>
<div class="a" style="left:625.20px;top:298.00px;width:96.00px;height:4.00px;background:#f8f8f8;"></div>
<div class="a" style="left:625.20px;top:298.00px;width:25.96px;height:4.00px;background:#0a7e0a;"></div>
<div class="t" style="left:729.89px;top:295.06px;font-size:9.5px;line-height:9.5px;color:#333;transform:scaleX(0.8600);">22.00°C</div>
<div class="a ledg" style="left:516.70px;top:305.42px;width:10.6px;height:10.6px;"></div>
<div class="t" style="left:532.93px;top:305.89px;font-size:9.6px;line-height:9.6px;color:#3a3a3a;transform:scaleX(0.8758);">EMT</div>
<div class="a" style="left:625.20px;top:308.72px;width:96.00px;height:4.00px;background:#f8f8f8;"></div>
<div class="a" style="left:625.20px;top:308.72px;width:35.38px;height:4.00px;background:#0a7e0a;"></div>
<div class="t" style="left:729.89px;top:305.78px;font-size:9.5px;line-height:9.5px;color:#333;transform:scaleX(0.8600);">29.98°C</div>
<div class="a ledg" style="left:516.70px;top:316.14px;width:10.6px;height:10.6px;"></div>
<div class="t" style="left:532.89px;top:316.61px;font-size:9.6px;line-height:9.6px;color:#3a3a3a;transform:scaleX(0.9203);">EMH</div>
<div class="a" style="left:625.20px;top:319.44px;width:96.00px;height:4.00px;background:#f8f8f8;"></div>
<div class="a" style="left:625.20px;top:319.44px;width:50.43px;height:4.00px;background:#0a7e0a;"></div>
<div class="t" style="left:730.14px;top:316.50px;font-size:9.5px;line-height:9.5px;color:#333;transform:scaleX(0.8600);">42.74%</div>
<div class="a ledg" style="left:516.70px;top:326.86px;width:10.6px;height:10.6px;"></div>
<div class="t" style="left:532.90px;top:327.33px;font-size:9.6px;line-height:9.6px;color:#3a3a3a;transform:scaleX(0.9090);">BC-Temp</div>
<div class="a" style="left:625.20px;top:330.16px;width:96.00px;height:4.00px;background:#f8f8f8;"></div>
<div class="a" style="left:625.20px;top:330.16px;width:32.40px;height:4.00px;background:#0a7e0a;"></div>
<div class="t" style="left:729.89px;top:327.22px;font-size:9.5px;line-height:9.5px;color:#333;transform:scaleX(0.8600);">27.46°C</div>
<div class="a ledg" style="left:516.70px;top:337.58px;width:10.6px;height:10.6px;"></div>
<div class="t" style="left:532.88px;top:338.05px;font-size:9.6px;line-height:9.6px;color:#3a3a3a;transform:scaleX(0.9404);">BC-Humi</div>
<div class="a" style="left:625.20px;top:340.88px;width:96.00px;height:4.00px;background:#f8f8f8;"></div>
<div class="a" style="left:625.20px;top:340.88px;width:26.77px;height:4.00px;background:#0a7e0a;"></div>
<div class="t" style="left:729.89px;top:337.94px;font-size:9.5px;line-height:9.5px;color:#333;transform:scaleX(0.8600);">22.69%</div>
<div class="a ledg" style="left:516.70px;top:348.30px;width:10.6px;height:10.6px;"></div>
<div class="t" style="left:532.89px;top:348.77px;font-size:9.6px;line-height:9.6px;color:#3a3a3a;transform:scaleX(0.9280);">BC-Cooling Temp</div>
<div class="a" style="left:625.20px;top:351.60px;width:96.00px;height:4.00px;background:#f8f8f8;"></div>
<div class="a" style="left:625.20px;top:351.60px;width:25.44px;height:4.00px;background:#0a7e0a;"></div>
<div class="t" style="left:729.89px;top:348.66px;font-size:9.5px;line-height:9.5px;color:#333;transform:scaleX(0.8600);">21.56°C</div>
<div class="a ledg" style="left:516.70px;top:359.02px;width:10.6px;height:10.6px;"></div>
<div class="t" style="left:532.91px;top:359.49px;font-size:9.6px;line-height:9.6px;color:#3a3a3a;transform:scaleX(0.8967);">BC-Temp1</div>
<div class="a" style="left:625.20px;top:362.32px;width:96.00px;height:4.00px;background:#f8f8f8;"></div>
<div class="a" style="left:625.20px;top:362.32px;width:27.14px;height:4.00px;background:#0a7e0a;"></div>
<div class="t" style="left:729.89px;top:359.38px;font-size:9.5px;line-height:9.5px;color:#333;transform:scaleX(0.8600);">23.00°C</div>
<div class="a ledg" style="left:516.70px;top:369.74px;width:10.6px;height:10.6px;"></div>
<div class="t" style="left:533.18px;top:370.21px;font-size:9.6px;line-height:9.6px;color:#3a3a3a;transform:scaleX(0.8677);">CPS Temp</div>
<div class="a" style="left:625.20px;top:373.04px;width:96.00px;height:4.00px;background:#f8f8f8;"></div>
<div class="t" style="left:729.65px;top:370.10px;font-size:9.5px;line-height:9.5px;color:#333;transform:scaleX(0.8600);">NaN</div>
<div class="a ledg" style="left:516.70px;top:380.46px;width:10.6px;height:10.6px;"></div>
<div class="t" style="left:533.60px;top:380.93px;font-size:9.6px;line-height:9.6px;color:#3a3a3a;transform:scaleX(0.9443);">Air-Temp</div>
<div class="a" style="left:625.20px;top:383.76px;width:96.00px;height:4.00px;background:#f8f8f8;"></div>
<div class="a" style="left:625.20px;top:383.76px;width:27.61px;height:4.00px;background:#0a7e0a;"></div>
<div class="t" style="left:729.89px;top:380.82px;font-size:9.5px;line-height:9.5px;color:#333;transform:scaleX(0.8600);">23.40°C</div>
<div class="a ledg" style="left:516.70px;top:391.18px;width:10.6px;height:10.6px;"></div>
<div class="t" style="left:533.60px;top:391.65px;font-size:9.6px;line-height:9.6px;color:#3a3a3a;transform:scaleX(0.9789);">Air-Humi</div>
<div class="a" style="left:625.20px;top:394.48px;width:96.00px;height:4.00px;background:#f8f8f8;"></div>
<div class="a" style="left:625.20px;top:394.48px;width:69.86px;height:4.00px;background:#0a7e0a;"></div>
<div class="t" style="left:729.97px;top:391.54px;font-size:9.5px;line-height:9.5px;color:#333;transform:scaleX(0.8600);">59.20%</div>
<div class="a ledg" style="left:516.70px;top:401.90px;width:10.6px;height:10.6px;"></div>
<div class="t" style="left:532.87px;top:402.37px;font-size:9.6px;line-height:9.6px;color:#3a3a3a;transform:scaleX(0.9523);">Dew-Temp</div>
<div class="a" style="left:625.20px;top:405.20px;width:96.00px;height:4.00px;background:#f8f8f8;"></div>
<div class="a" style="left:625.20px;top:405.20px;width:17.11px;height:4.00px;background:#0a7e0a;"></div>
<div class="t" style="left:729.69px;top:402.26px;font-size:9.5px;line-height:9.5px;color:#333;transform:scaleX(0.8600);">14.50°C</div>
<div class="a" style="left:19.60px;top:427.00px;width:760.40px;height:64.20px;border:1px solid #cbcbcb;box-shadow:inset 1px 1px 0 #f0f0f0;"></div>
<div class="a" style="left:25.30px;top:422.00px;width:57.70px;height:7.20px;border:1px solid #cbcbcb;border-bottom:none;background:#e2e2e2;box-shadow:inset 1px 1px 0 #f0f0f0;"></div>
<div class="t" style="left:31.55px;top:425.49px;font-size:11px;line-height:11px;color:#111;font-weight:bold;transform:scaleX(0.9122);-webkit-text-stroke:0.25px #111;">Base Info</div>
<div class="t" style="left:45.69px;top:438.96px;font-size:9.5px;line-height:9.5px;color:#3a3a3a;transform:scaleX(0.9351);">Hardware</div>
<div class="a" style="left:92.30px;top:438.00px;width:90.40px;height:13.50px;background:#dedede;border:1px solid #c0c0c0;"></div>
<div class="t" style="left:99.65px;top:439.27px;font-size:9.6px;line-height:9.6px;color:#808080;transform:scaleX(0.8986);">1.02</div>
<div class="t" style="left:45.68px;top:456.96px;font-size:9.5px;line-height:9.5px;color:#3a3a3a;transform:scaleX(0.9484);">MCU</div>
<div class="a" style="left:92.30px;top:456.10px;width:90.40px;height:13.50px;background:#dedede;border:1px solid #c0c0c0;"></div>
<div class="t" style="left:94.63px;top:457.27px;font-size:9.6px;line-height:9.6px;color:#808080;transform:scaleX(0.9243);">10.1.1 (2021/7/30)</div>
<div class="t" style="left:45.76px;top:474.96px;font-size:9.5px;line-height:9.5px;color:#3a3a3a;transform:scaleX(0.8413);">FPGA</div>
<div class="a" style="left:92.30px;top:474.20px;width:90.40px;height:13.50px;background:#dedede;border:1px solid #c0c0c0;"></div>
<div class="t" style="left:94.63px;top:475.27px;font-size:9.6px;line-height:9.6px;color:#808080;transform:scaleX(0.9243);">10.1.0 (2021/4/27)</div>
<div class="t" style="left:200.62px;top:438.96px;font-size:9.5px;line-height:9.5px;color:#3a3a3a;transform:scaleX(1.0282);">P/N</div>
<div class="a" style="left:243.20px;top:438.00px;width:93.50px;height:13.50px;background:#dedede;border:1px solid #c0c0c0;"></div>
<div class="t" style="left:249.62px;top:439.27px;font-size:9.6px;line-height:9.6px;color:#808080;transform:scaleX(0.8832);">BKW3.0</div>
<div class="t" style="left:200.97px;top:456.96px;font-size:9.5px;line-height:9.5px;color:#3a3a3a;">S/N</div>
<div class="a" style="left:243.20px;top:456.10px;width:93.50px;height:13.50px;background:#dedede;border:1px solid #c0c0c0;"></div>
<div class="t" style="left:249.87px;top:457.27px;font-size:9.6px;line-height:9.6px;color:#808080;transform:scaleX(0.8886);">CMSK00716</div>
<div class="t" style="left:201.40px;top:474.96px;font-size:9.5px;line-height:9.5px;color:#3a3a3a;transform:scaleX(0.9132);">AccRun</div>
<div class="a" style="left:243.20px;top:474.20px;width:93.50px;height:13.50px;background:#dedede;border:1px solid #c0c0c0;"></div>
<div class="t" style="left:250.12px;top:475.27px;font-size:9.6px;line-height:9.6px;color:#808080;transform:scaleX(0.9363);">40 h 25 min</div>
<div class="t" style="left:354.84px;top:438.96px;font-size:9.5px;line-height:9.5px;color:#3a3a3a;transform:scaleX(1.0056);">Model</div>
<div class="a" style="left:391.20px;top:438.00px;width:93.10px;height:13.50px;background:#dedede;border:1px solid #c0c0c0;"></div>
<div class="t" style="left:397.13px;top:439.27px;font-size:9.6px;line-height:9.6px;color:#808080;transform:scaleX(0.8698);">MFSC_12000W</div>
<div class="t" style="left:354.76px;top:456.96px;font-size:9.5px;line-height:9.5px;color:#cdcdcd;transform:scaleX(0.9857);">ID</div>
<div class="a" style="left:391.20px;top:456.10px;width:93.10px;height:13.50px;background:#e4e4e4;"></div>
<div class="t" style="left:354.91px;top:474.96px;font-size:9.5px;line-height:9.5px;color:#3a3a3a;transform:scaleX(0.9031);">Run</div>
<div class="a" style="left:391.20px;top:474.20px;width:93.10px;height:13.50px;background:#dedede;border:1px solid #c0c0c0;"></div>
<div class="t" style="left:397.52px;top:475.27px;font-size:9.6px;line-height:9.6px;color:#808080;transform:scaleX(0.9498);">1 h 2 min</div>
<div class="t" style="left:502.35px;top:456.96px;font-size:9.5px;line-height:9.5px;color:#3a3a3a;transform:scaleX(0.8618);">Exp</div>
<div class="a" style="left:541.20px;top:456.10px;width:86.10px;height:13.50px;background:#dedede;border:1px solid #c0c0c0;"></div>
<div class="t" style="left:547.59px;top:457.27px;font-size:9.6px;line-height:9.6px;color:#808080;transform:scaleX(0.9886);">Unlimited</div>
<div class="t" style="left:503.00px;top:474.96px;font-size:9.5px;line-height:9.5px;color:#3a3a3a;transform:scaleX(0.8973);">AccEmit</div>
<div class="a" style="left:541.20px;top:474.20px;width:86.10px;height:13.50px;background:#dedede;border:1px solid #c0c0c0;"></div>
<div class="t" style="left:547.84px;top:475.27px;font-size:9.6px;line-height:9.6px;color:#808080;transform:scaleX(0.9513);">2 h 26 min</div>
<div class="t" style="left:646.29px;top:438.96px;font-size:9.5px;line-height:9.5px;color:#3a3a3a;transform:scaleX(0.9280);">Date</div>
<div class="a" style="left:674.20px;top:438.00px;width:86.40px;height:13.50px;background:#dedede;border:1px solid #c0c0c0;"></div>
<div class="t" style="left:680.75px;top:439.27px;font-size:9.6px;line-height:9.6px;color:#808080;transform:scaleX(0.9473);">2021-08-25</div>
<div class="t" style="left:646.83px;top:456.96px;font-size:9.5px;line-height:9.5px;color:#3a3a3a;transform:scaleX(0.8987);">Time</div>
<div class="a" style="left:674.20px;top:456.10px;width:86.40px;height:13.50px;background:#dedede;border:1px solid #c0c0c0;"></div>
<div class="t" style="left:680.54px;top:457.27px;font-size:9.6px;line-height:9.6px;color:#808080;transform:scaleX(0.9235);">11 : 20 : 27</div>
<div class="t" style="left:646.31px;top:474.96px;font-size:9.5px;line-height:9.5px;color:#3a3a3a;transform:scaleX(0.9093);">Emit</div>
<div class="a" style="left:674.20px;top:474.20px;width:86.40px;height:13.50px;background:#dedede;border:1px solid #c0c0c0;"></div>
<div class="t" style="left:680.83px;top:475.27px;font-size:9.6px;line-height:9.6px;color:#808080;transform:scaleX(0.9571);">0 h 0 min</div>
<svg class="a" style="left:0px;top:490px" width="120" height="30">
<defs><linearGradient id="lg" x1="0" y1="0" x2="0" y2="1"><stop offset="0" stop-color="#1f78d0"/><stop offset="1" stop-color="#1560b4"/></linearGradient>
<linearGradient id="lr" x1="0" y1="0" x2="1" y2="0"><stop offset="0" stop-color="#e01a1a"/><stop offset="1" stop-color="#f06a20"/></linearGradient></defs>
<g transform="translate(0,24.4) skewX(-14) translate(0,-24.4)">
<text x="17.5" y="24.4" font-family="Liberation Sans" font-weight="bold" font-style="italic" font-size="19.2" fill="url(#lg)" stroke="#1a6cc4" stroke-width="0.7" textLength="55.5" lengthAdjust="spacingAndGlyphs">MAX</text>
</g>
<path d="M46.8 18.1 L62 18.1 L60.3 20.8 L49.5 20.8 L46.3 24.5 L41.2 24.5 Z" fill="url(#lr)"/>
</svg>
<div class="t" style="left:77px;top:507.5px;font-size:7.4px;line-height:8px;color:#1a5cb0;font-weight:900;-webkit-text-stroke-width:0.25px;">激光中国<span style="color:#d02030">区</span></div>
<div class="t" style="left:646.66px;top:503.26px;font-size:9.5px;line-height:9.5px;color:#333;transform:scaleX(0.7829);">Version：</div>
<div class="t" style="left:685.72px;top:503.26px;font-size:9.5px;line-height:9.5px;color:#333;transform:scaleX(0.8183);">1.0.0.86（2021/8/25）</div>
</body></html>
